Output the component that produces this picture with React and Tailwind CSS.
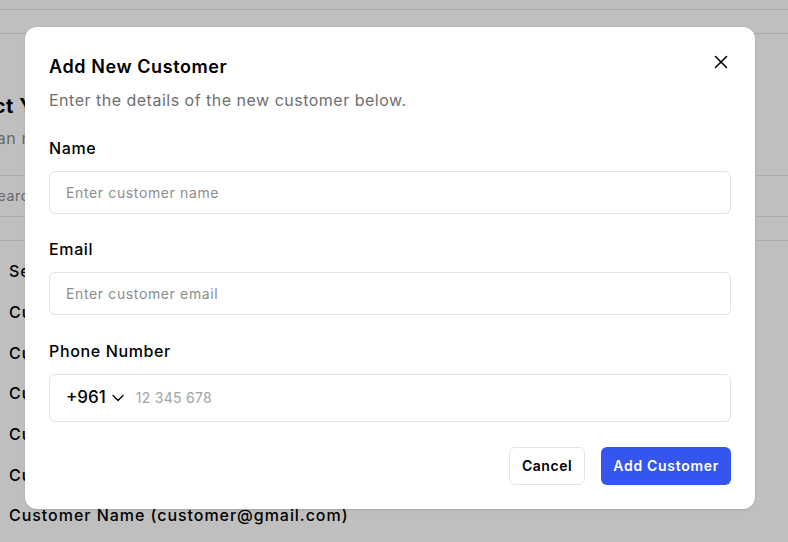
import { X, ChevronDown } from 'lucide-react'

const rows = [
  'Select a customer',
  'Customer Name (customer@gmail.com)',
  'Customer Name (customer@gmail.com)',
  'Customer Name (customer@gmail.com)',
  'Customer Name (customer@gmail.com)',
  'Customer Name (customer@gmail.com)',
  'Customer Name (customer@gmail.com)',
]

function Field({ label, placeholder, className = '' }) {
  return (
    <div className={`flex flex-col ${className}`}>
      <label className="text-base font-medium leading-6 tracking-[0.04em] text-black">{label}</label>
      <input
        className="mt-[11px] h-[43px] w-full rounded-md border border-[#e2e2e2] px-4 text-sm tracking-[0.045em] text-black outline-none placeholder:text-[#8d8d8d]"
        placeholder={placeholder}
      />
    </div>
  )
}

export default function App() {
  return (
    <div className="relative h-[542px] w-[788px] overflow-hidden bg-white font-['Inter',sans-serif]">
      {/* page behind the dialog */}
      <div className="h-[10px] border-b border-[#e4e4e4] bg-[#fcfcfc]" />
      <div className="h-[24px] border-b border-[#e4e4e4]" />
      <div className="pl-[9px]">
        <h1 className="-ml-[60px] mt-[58px] text-xl font-bold leading-7 tracking-[0.03em] text-black">Select Your Customer</h1>
        <p className="-ml-[58px] mt-[6px] text-base leading-6 tracking-[0.04em] text-[#8a8a8a]">You can register a new customer or pick one</p>
      </div>
      <div className="mt-[25px] flex h-[42px] items-center border-y border-[#e4e4e4] pl-[9px]">
        <span className="-ml-[21px] text-sm tracking-[0.045em] text-[#8a8a8a]">Search customers</span>
      </div>
      <div className="h-[24px] border-b border-[#e4e4e4]" />
      <ul className="pt-[10px] pl-[9px]">
        {rows.map((r, i) => (
          <li key={i} className="flex h-[40.67px] items-center text-base font-medium tracking-[0.06em] text-black">{r}</li>
        ))}
      </ul>

      {/* overlay */}
      <div className="absolute inset-0 bg-black/25" />

      {/* dialog */}
      <div className="absolute left-[25px] top-[27px] w-[730px] rounded-xl bg-white px-6 pt-[26px] pb-6 shadow-sm">
        <button className="absolute right-[23px] top-[24px] text-black">
          <X size={22} strokeWidth={1.7} />
        </button>
        <h2 className="text-lg font-semibold leading-7 tracking-[0.033em] text-black">Add New Customer</h2>
        <p className="mt-[7px] text-base leading-6 tracking-[0.031em] text-[#6f6f6f]">Enter the details of the new customer below.</p>

        <div className="mt-6 flex flex-col">
          <Field label="Name" placeholder="Enter customer name" />
          <Field label="Email" placeholder="Enter customer email" className="mt-[23px]" />
          <div className="mt-6 flex flex-col">
            <label className="text-base font-medium leading-6 tracking-[0.04em] text-black">Phone Number</label>
            <div className="mt-[11px] flex h-[48px] items-center rounded-md border border-[#e2e2e2] px-4">
              <button className="flex items-center gap-0.5 text-[17px] font-medium text-black">
                +961
                <ChevronDown size={20} strokeWidth={1.5} />
              </button>
              <input
                className="ml-2 flex-1 text-sm tracking-[0.02em] text-black outline-none placeholder:text-[#a3a3a3]"
                placeholder="12 345 678"
              />
            </div>
          </div>
        </div>

        <div className="mt-[25px] flex justify-end gap-4">
          <button className="h-[38px] rounded-md border border-[#e4e4e4] bg-white px-3 text-sm font-semibold tracking-[0.04em] text-black">
            Cancel
          </button>
          <button className="h-[38px] rounded-md bg-[#3456ef] px-3 text-sm font-semibold tracking-[0.05em] text-white">
            Add Customer
          </button>
        </div>
      </div>
    </div>
  )
}
